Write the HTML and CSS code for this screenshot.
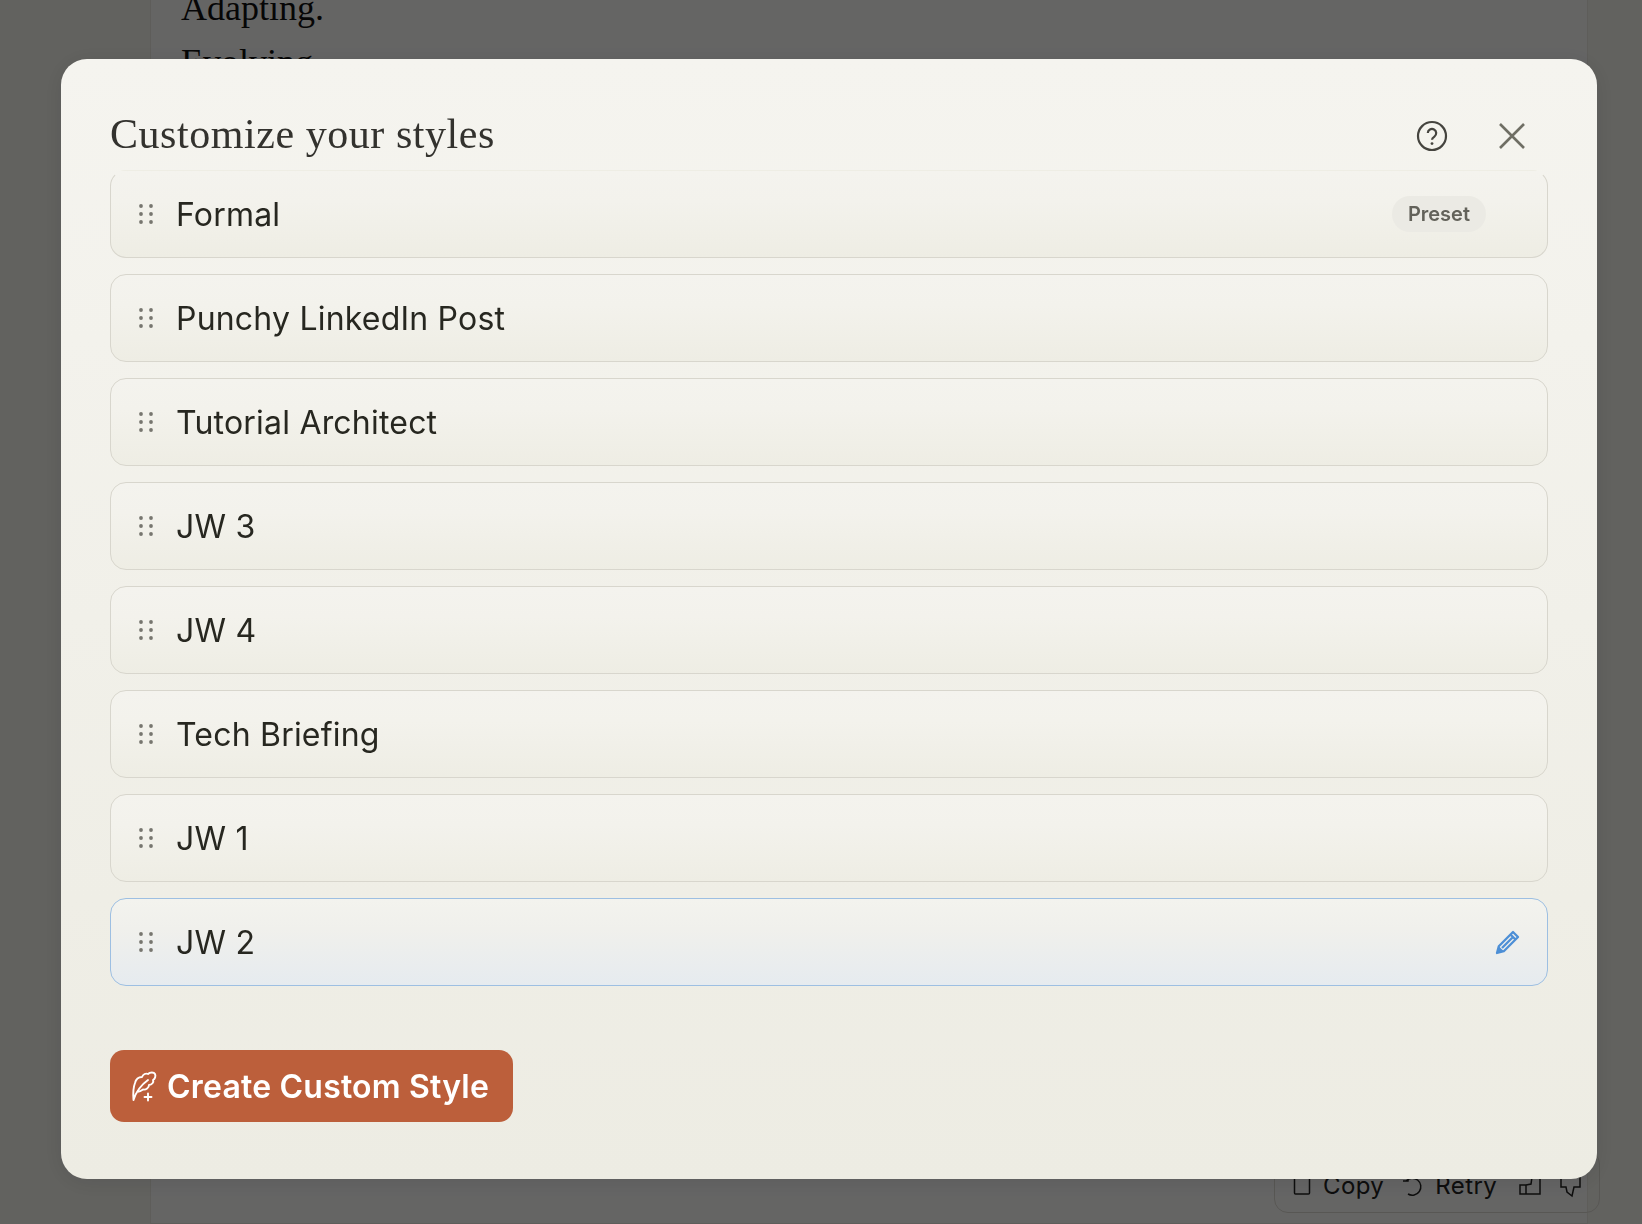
FILE: index.html
```html
<!DOCTYPE html>
<html lang="en">
<head>
<meta charset="utf-8">
<title>Customize your styles</title>
<link rel="stylesheet" href="styles.css">
</head>
<body>
<main class="page">
  <article class="doc">
    <p class="doc-line">Adapting.</p>
    <p class="doc-line">Evolving.</p>
  </article>
  <div class="actions">
    <span class="action"><svg class="ai" width="18" height="24" viewBox="0 0 18 24"><rect x="1.500" y="3" width="15" height="17" rx="1"/></svg>Copy</span>
    <span class="action"><svg class="ai" width="22" height="24" viewBox="0 0 22 24"><path d="M5 7a8.500 8.500 0 1 1 2 13M2 7h5l.5-5"/></svg>Retry</span>
    <svg class="ai thumb" width="24" height="24" viewBox="0 0 24 24"><path d="M2 11h6v9H2zM8 11l5-1 1-7h8v17H8"/></svg>
    <svg class="ai" width="24" height="24" viewBox="0 0 24 24"><path d="M2 3h19v10h-6l-2 9-5-4-1-5H2z"/></svg>
  </div>
</main>
<div class="overlay"></div>
<section class="modal">
  <header class="modal-head">
    <h1 class="modal-title">Customize your styles</h1>
    <div class="head-icons">
      <svg class="help" width="32" height="32" viewBox="0 0 32 32"><circle cx="16" cy="16" r="14"/><path d="M11.800 13a4.200 4.200 0 1 1 6.600 3.600c-1.500 1-2.400 1.800-2.400 3.200"/><circle class="dot" cx="16" cy="23.600" r="1.400"/></svg>
      <svg class="close" width="28" height="28" viewBox="0 0 28 28"><path d="M2 2l24 24M26 2L2 26"/></svg>
    </div>
  </header>
  <ul class="list">
    <li class="row"><svg class="grip" width="14" height="22" viewBox="0 0 14 22"><circle cx="2" cy="3" r="1.900"/><circle cx="12" cy="3" r="1.900"/><circle cx="2" cy="11" r="1.900"/><circle cx="12" cy="11" r="1.900"/><circle cx="2" cy="19" r="1.900"/><circle cx="12" cy="19" r="1.900"/></svg><span class="name">Formal</span><span class="badge">Preset</span></li>
    <li class="row"><svg class="grip" width="14" height="22" viewBox="0 0 14 22"><circle cx="2" cy="3" r="1.900"/><circle cx="12" cy="3" r="1.900"/><circle cx="2" cy="11" r="1.900"/><circle cx="12" cy="11" r="1.900"/><circle cx="2" cy="19" r="1.900"/><circle cx="12" cy="19" r="1.900"/></svg><span class="name">Punchy LinkedIn Post</span></li>
    <li class="row"><svg class="grip" width="14" height="22" viewBox="0 0 14 22"><circle cx="2" cy="3" r="1.900"/><circle cx="12" cy="3" r="1.900"/><circle cx="2" cy="11" r="1.900"/><circle cx="12" cy="11" r="1.900"/><circle cx="2" cy="19" r="1.900"/><circle cx="12" cy="19" r="1.900"/></svg><span class="name">Tutorial Architect</span></li>
    <li class="row"><svg class="grip" width="14" height="22" viewBox="0 0 14 22"><circle cx="2" cy="3" r="1.900"/><circle cx="12" cy="3" r="1.900"/><circle cx="2" cy="11" r="1.900"/><circle cx="12" cy="11" r="1.900"/><circle cx="2" cy="19" r="1.900"/><circle cx="12" cy="19" r="1.900"/></svg><span class="name">JW 3</span></li>
    <li class="row"><svg class="grip" width="14" height="22" viewBox="0 0 14 22"><circle cx="2" cy="3" r="1.900"/><circle cx="12" cy="3" r="1.900"/><circle cx="2" cy="11" r="1.900"/><circle cx="12" cy="11" r="1.900"/><circle cx="2" cy="19" r="1.900"/><circle cx="12" cy="19" r="1.900"/></svg><span class="name">JW 4</span></li>
    <li class="row"><svg class="grip" width="14" height="22" viewBox="0 0 14 22"><circle cx="2" cy="3" r="1.900"/><circle cx="12" cy="3" r="1.900"/><circle cx="2" cy="11" r="1.900"/><circle cx="12" cy="11" r="1.900"/><circle cx="2" cy="19" r="1.900"/><circle cx="12" cy="19" r="1.900"/></svg><span class="name">Tech Briefing</span></li>
    <li class="row"><svg class="grip" width="14" height="22" viewBox="0 0 14 22"><circle cx="2" cy="3" r="1.900"/><circle cx="12" cy="3" r="1.900"/><circle cx="2" cy="11" r="1.900"/><circle cx="12" cy="11" r="1.900"/><circle cx="2" cy="19" r="1.900"/><circle cx="12" cy="19" r="1.900"/></svg><span class="name">JW 1</span></li>
    <li class="row row-active"><svg class="grip" width="14" height="22" viewBox="0 0 14 22"><circle cx="2" cy="3" r="1.900"/><circle cx="12" cy="3" r="1.900"/><circle cx="2" cy="11" r="1.900"/><circle cx="12" cy="11" r="1.900"/><circle cx="2" cy="19" r="1.900"/><circle cx="12" cy="19" r="1.900"/></svg><span class="name">JW 2</span><svg class="pencil" width="27" height="27" viewBox="0 0 27 27"><path d="M3 24l1.800-6.800L19 3l5 5L9.800 22.200zM16.500 5.500l5 5M8 19l11.500-11.500"/><path class="tip" d="M3 24l1.800-6.800 5 5z"/></svg></li>
  </ul>
  <button class="create" type="button">
    <svg class="feather" width="28" height="32" viewBox="0 0 28 32"><path d="M3.500 30C3 24 3 18 5 13c1-4 4-6 7-6 1-3 4-4 6-3 2-2 6-2 7 0s0 5-2 6c1 2-1 5-4 5 0 3-3 5-6 4.500-2 1.500-4 2.500-6 2.500M3.500 30C6 22 11 15 18 10"/><path d="M14.500 27h7M18 23.500v7"/></svg>
    <span>Create Custom Style</span>
  </button>
</section>
</body>
</html>
```
FILE: styles.css
```css
* { box-sizing: border-box; }
html, body { margin: 0; height: 100%; overflow: hidden; }
body { background: #f5f4ee; font-family: "Inter", "Liberation Sans", sans-serif; }

.page { position: relative; height: 1224px; overflow: hidden; }
.doc {
  position: absolute; left: 150px; right: 54px; top: -15px; bottom: 0;
  background: #fdfdfb;
  border: 1px solid #ebe9e0;
  padding: 0 30px;
  font-family: "Liberation Serif", serif;
  font-size: 36px; color: #111;
}
.doc-line { margin: 0 0 10px; line-height: 44px; }
.actions {
  position: absolute; left: 1274px; top: 1150px; width: 326px; height: 63px;
  display: flex; align-items: center; gap: 17px;
  padding: 8px 18px 0; border: 1px solid #dcdad2; border-radius: 14px;
  color: #222; font-size: 24px; letter-spacing: .4px;
}
.action { display: inline-flex; align-items: center; gap: 12px; }
.ai { fill: none; stroke: #222; stroke-width: 1.5; flex: none; }
.thumb { margin-left: 4px; }

.overlay { position: fixed; inset: 0; background: rgba(0,0,0,.6); }

.modal {
  position: fixed; left: 61px; top: 59px; width: 1536px; height: 1120px;
  border-radius: 26px; padding: 45px 49px 0;
  background: linear-gradient(180deg, #f5f4ef 0%, #edece3 100%);
  box-shadow: 0 3px 24px rgba(0,0,0,.1);
}
.modal-head { display: flex; justify-content: space-between; align-items: center; height: 60px; margin-bottom: 6px; }
.modal-title {
  margin: 0; font-family: "Liberation Serif", serif; font-weight: 400;
  font-size: 42px; color: #33322e; letter-spacing: .55px;
}
.head-icons { display: flex; align-items: center; gap: 50px; padding: 4px 22px 0 0; }
.help { fill: none; stroke: #45443f; stroke-width: 2.2; }
.help .dot { fill: #45443f; stroke: none; }
.close { fill: none; stroke: #6f6e64; stroke-width: 2.6; }

.list { list-style: none; margin: 0; padding: 0; display: flex; flex-direction: column; gap: 16px; }
.row {
  height: 88px; display: flex; align-items: center; gap: 23px;
  padding: 0 26px 0 28px;
  border: 1px solid #d8d6cd; border-radius: 16px;
  background: linear-gradient(180deg, #f4f3ee 0%, #f3f2ec 35%, #eeede4 100%);
}
.row:first-child { border-top-color: transparent; }
.row-active { border-color: #9dbfe2; background: linear-gradient(180deg, #f3f3ee 0%, #f0f0ec 35%, #e6ebef 100%); }
.grip { fill: #77766f; flex: none; }
.name { font-size: 32px; color: #272720; flex: 1; letter-spacing: .2px; }
.badge {
  font-size: 20px; font-weight: 600; color: #63625a;
  background: #ebeae4; border-radius: 19px; padding: 6px 16px;
  margin-right: 35px;
}
.pencil { fill: none; stroke: #4d8fd6; stroke-width: 2.3; stroke-linejoin: round; flex: none; }
.pencil .tip { fill: #4d8fd6; stroke: none; }

.create {
  display: flex; align-items: center; gap: 9px;
  margin-top: 64px; height: 72px; padding: 0 24px 0 20px;
  border: 0; border-radius: 14px; background: #bc5f3b;
  color: #fff; font-family: "Inter", sans-serif; font-size: 32px; font-weight: 600; letter-spacing: .2px;
}
.feather { fill: none; stroke: #fff; stroke-width: 1.9; stroke-linecap: round; stroke-linejoin: round; flex: none; }
```
